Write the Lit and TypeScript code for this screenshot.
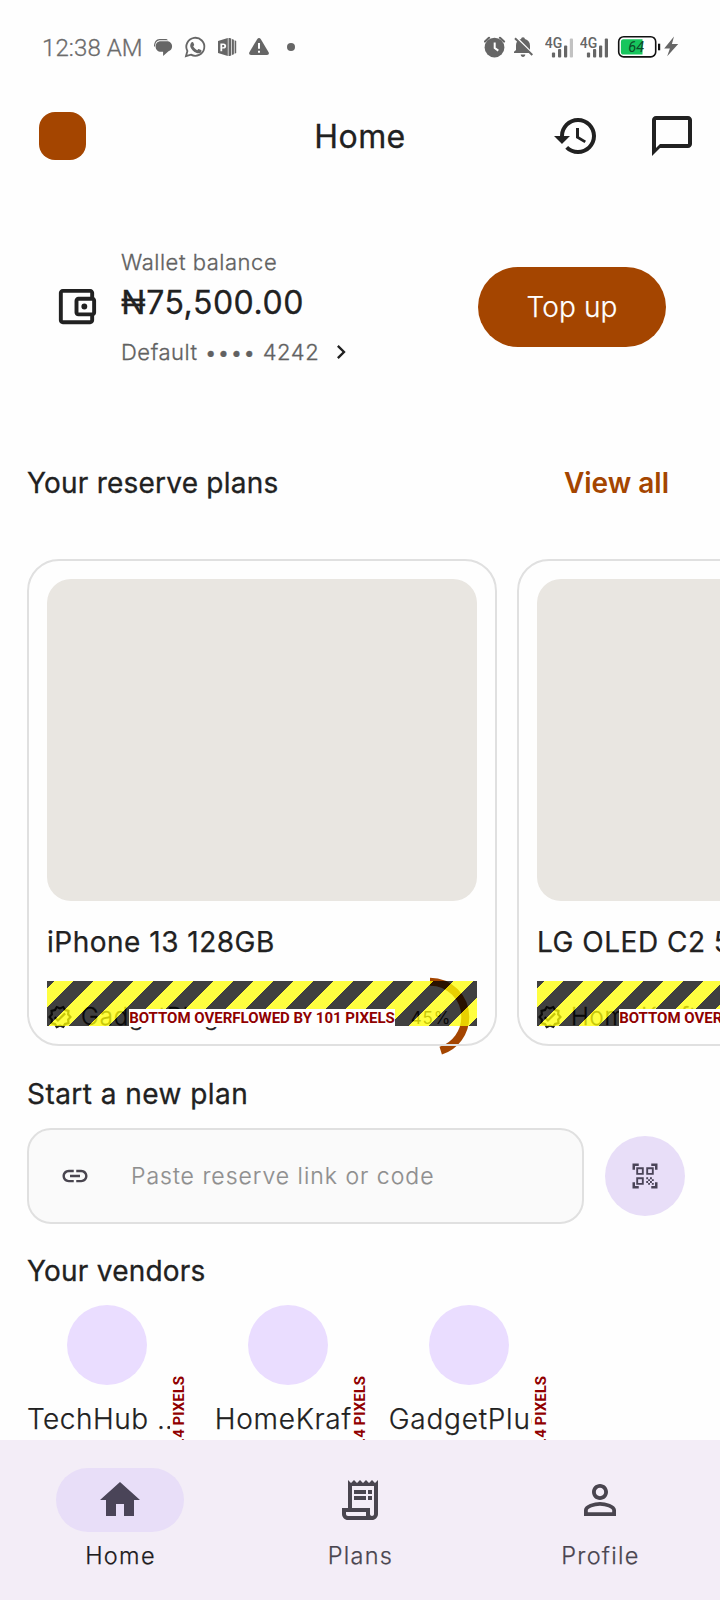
import { LitElement, html, css } from "lit";
import { customElement, property } from "lit/decorators.js";

const PATHS = {
  history:
    "M13,3c-4.97,0 -9,4.03 -9,9L1,12l3.89,3.89 0.07,0.14L9,12L6,12c0,-3.87 3.13,-7 7,-7s7,3.13 7,7 -3.13,7 -7,7c-1.93,0 -3.68,-0.79 -4.94,-2.06l-1.42,1.42C8.27,19.99 10.51,21 13,21c4.97,0 9,-4.03 9,-9s-4.03,-9 -9,-9zM12,8v5l4.28,2.54 0.72,-1.21 -3.5,-2.08L13.5,8L12,8z",
  chat: "M20 2H4c-1.1 0-2 .9-2 2v18l4-4h14c1.1 0 2-.9 2-2V4c0-1.1-.9-2-2-2zm0 14H6l-2 2V4h16v12z",
  wallet:
    "M21 7.28V5c0-1.1-.9-2-2-2H5c-1.11 0-2 .9-2 2v14c0 1.1.89 2 2 2h14c1.1 0 2-.9 2-2v-2.28c.59-.35 1-.98 1-1.72V9c0-.74-.41-1.37-1-1.72zM20 9v6h-7V9h7zM5 19V5h14v2h-6c-1.1 0-2 .9-2 2v6c0 1.1.9 2 2 2h6v2H5z M16 10.5a1.5 1.5 0 1 0 0 3a1.5 1.5 0 1 0 0-3z",
  chevron: "M10 6L8.59 7.41 13.17 12l-4.58 4.59L10 18l6-6z",
  link: "M3.9 12c0-1.71 1.39-3.1 3.1-3.1h4V7H7c-2.76 0-5 2.24-5 5s2.24 5 5 5h4v-1.9H7c-1.71 0-3.1-1.39-3.1-3.1zM8 13h8v-2H8v2zm9-6h-4v1.9h4c1.71 0 3.1 1.39 3.1 3.1s-1.39 3.1-3.1 3.1h-4V17h4c2.76 0 5-2.24 5-5s-2.24-5-5-5z",
  qr: "M9.5 6.5v3h-3v-3h3M11 5H5v6h6V5zm-1.5 9.5v3h-3v-3h3M11 13H5v6h6v-6zm6.5-6.5v3h-3v-3h3M19 5h-6v6h6V5zm-6 8h1.5v1.5H13V13zm1.5 1.5H16V16h-1.5v-1.5zM16 13h1.5v1.5H16V13zm-3 3h1.5v1.5H13V16zm1.5 1.5H16V19h-1.5v-1.5zM16 16h1.5v1.5H16V16zm1.5-1.5H19V16h-1.5v-1.5zm0 3H19V19h-1.5v-1.5zM22 7h-2V4h-3V2h5v5zm0 15v-5h-2v3h-3v2h5zM2 22h5v-2H4v-3H2v5zM2 2v5h2V4h3V2H2z",
  verified:
    "M23 11.99l-2.44-2.79.34-3.69-3.61-.82L15.4 1.5 12 2.96 8.6 1.5 6.71 4.69 3.1 5.5l.34 3.7L1 11.99l2.44 2.79-.34 3.7 3.61.82 1.89 3.2 3.4-1.47 3.4 1.46 1.89-3.19 3.61-.82-.34-3.69 2.44-2.8zm-3.95 1.48l-.56.65.08.85.18 1.95-1.9.43-.84.19-.44.74-.99 1.68-1.78-.77-.8-.34-.79.34-1.78.77-.99-1.67-.44-.74-.84-.19-1.9-.43.18-1.96.08-.85-.56-.65-1.29-1.47 1.29-1.48.56-.65-.09-.86-.18-1.94 1.9-.43.84-.19.44-.74.99-1.68 1.78.77.8.34.79-.34 1.78-.77.99 1.68.44.74.84.19 1.9.43-.18 1.95-.08.85.56.65 1.29 1.47-1.28 1.48z M10.09 13.75l-2.32-2.33-1.48 1.49 3.8 3.81 7.34-7.36-1.48-1.49z",
  home: "M10 20v-6h4v6h5v-8h3L12 3 2 12h3v8z",
  receipt:
    "M19.5 3.5L18 2l-1.5 1.5L15 2l-1.5 1.5L12 2l-1.5 1.5L9 2 7.5 3.5 6 2v14H3v3c0 1.66 1.34 3 3 3h12c1.66 0 3-1.34 3-3V2l-1.5 1.5zM15 20H6c-.55 0-1-.45-1-1v-1h10v2zm4-1c0 .55-.45 1-1 1s-1-.45-1-1v-3H8V5h11v14z M9 7h6v2H9z M16 7h2v2h-2z M9 10h6v2H9z M16 10h2v2h-2z",
  person:
    "M12 5.9c1.16 0 2.1.94 2.1 2.1s-.94 2.1-2.1 2.1S9.9 9.16 9.9 8s.94-2.1 2.1-2.1m0 9c2.97 0 6.1 1.46 6.1 2.1v1.1H5.9V17c0-.64 3.13-2.1 6.1-2.1M12 4C9.79 4 8 5.79 8 8s1.79 4 4 4 4-1.79 4-4-1.79-4-4-4zm0 9c-2.67 0-8 1.34-8 4v3h16v-3c0-2.66-5.33-4-8-4z",
};

const icon = (name: keyof typeof PATHS, size: number) =>
  html`<svg class="icon" width=${size} height=${size} viewBox="0 0 24 24" fill="currentColor"><path d=${PATHS[name]}></path></svg>`;

@customElement("status-bar")
class StatusBar extends LitElement {
  static styles = css`
    :host {
      display: flex;
      align-items: center;
      height: 94px;
      padding: 0 41px 0 42px;
      box-sizing: border-box;
      color: #666;
      font-family: Roboto, sans-serif;
    }
    .time {
      width: 112px;
      font-size: 24px;
      line-height: 28px;
      font-weight: 300;
      -webkit-text-stroke: 0.3px currentColor;
      letter-spacing: 0.1px;
      color: #6b6b6b;
      white-space: nowrap;
      padding-top: 1px;
    }
    svg {
      display: block;
      flex: none;
    }
    .spacer {
      flex: 1;
    }
  `;

  private signal(last: string) {
    return html`<svg width="35" height="24" viewBox="0 0 35 24" fill="#666">
      <text x="-0.3" y="12.6" font-family="Roboto" font-size="14.5" font-weight="500" textLength="17.5" lengthAdjust="spacingAndGlyphs">4G</text>
      <rect x="6.9" y="17.5" width="3.2" height="5" rx="1"></rect>
      <rect x="13" y="14" width="3.2" height="8.5" rx="1"></rect>
      <rect x="19" y="10.5" width="3.2" height="12" rx="1"></rect>
      <rect x="24.8" y="3.5" width="3.2" height="19" rx="1" fill=${last}></rect>
    </svg>`;
  }

  render() {
    return html`
      <span class="time">12:38 AM</span>
      <svg width="137" height="24" viewBox="154 35 137 24" fill="#666" overflow="visible">
        <path d="M154 46.5c0-4.5 2.2-7.5 5.6-7.5h6.8l1.8 1.300h-7.800c-3.600 0-5.200 2.400-5.400 6.200z"></path>
        <path d="M160.700 41.300h6.100c3.100 0 5.300 2.100 5.300 5 0 2.700-1.400 4.200-3.600 5l-5.400 4.800v-4.300h-2c-3.400 0-5.500-2.200-5.500-5.300 0-3.100 2-5.200 5.100-5.200z"></path>
        <path d="M186 56.100l1.400-5.100a9 9 0 1 1 3.500 3.600z" fill="none" stroke="#666" stroke-width="1.8"></path>
        <path d="M191.600 42.300c.6-.6 1.400-.5 1.700.2l.8 1.900c.2.5 0 .9-.9 1.900 1 1.900 2.300 3.100 4.200 3.900.9-1.100 1.200-1.300 1.800-1l1.900.9c.7.4.5 1.300 0 2.100-.8 1.200-2.600 1.500-4.400.8-3.200-1.200-5.300-3.400-6.300-6-.5-1.800 0-3.500 1.200-4.700z"></path>
        <path fill-rule="evenodd" d="M218 41l9.800-3v18l-9.800-3zm2.400 2.400v7.800h1.800v-2.600h1.200c1.700 0 2.800-1 2.800-2.600s-1.100-2.600-2.800-2.600zm1.800 1.500h.9c.8 0 1.200.4 1.200 1.100s-.4 1.200-1.200 1.200h-.9z"></path>
        <path d="M228.500 38h1.200l1.500.5v17l-1.500.5h-1.200zM231.900 39l2 .8v14.400l-2 .8zM234.600 40.300l1.600.8v11.800l-1.600.8z"></path>
        <path d="M257.300 38.900c.8-1.300 2.600-1.300 3.400 0l7.900 13.300c.8 1.400-.1 2.800-1.600 2.800h-16c-1.500 0-2.400-1.400-1.600-2.800z"></path>
        <path d="M259 43v5.800M259 50.800v2" stroke="#fff" stroke-width="2"></path>
        <circle cx="291" cy="47" r="4"></circle>
      </svg>
      <span class="spacer"></span>
      <svg width="61" height="24" viewBox="484 35 61 24" fill="#666">
        <circle cx="494.5" cy="47.600" r="9.900"></circle>
        <path d="M485 41.500l4-3.700M504 41.500l-4-3.700" stroke="#666" stroke-width="2.200" stroke-linecap="round"></path>
        <path d="M494.700 42.500v5.500l3.600 2.600" fill="none" stroke="#fff" stroke-width="2"></path>
        <path d="M523 37.200c1.200 0 1.900.8 1.900 1.900 3.300.8 5.100 3.400 5.100 6.700v5l2 2.200h-18v-1.200l2-1.800v-4.700c0-3 1.900-5.500 5.100-6.200 0-1.100.7-1.900 1.900-1.900zM520.700 54.500h4.600c0 1.400-1 2.400-2.300 2.400s-2.300-1-2.300-2.400z"></path>
        <path d="M516.500 37.600l17 17" stroke="#fff" stroke-width="2"></path>
        <path d="M515 38.200l17.300 16.800" stroke="#666" stroke-width="2"></path>
      </svg>
      ${this.signal("#c2c2c2")}${this.signal("#666")}
      <svg width="64" height="24" viewBox="615 35 64 24">
        <rect x="618.7" y="36.700" width="37" height="20.200" rx="5" fill="#fff" stroke="#111" stroke-width="1.600"></rect>
        <path d="M623.5 39.300h19v15.200h-19a2.600 2.600 0 0 1-2.600-2.600v-10a2.600 2.600 0 0 1 2.600-2.600z" fill="#17c55d"></path>
        <text x="628.3" y="51.8" font-family="Roboto" font-size="14.5" font-style="italic" fill="#0d4a27">64</text>
        <rect x="658" y="43.700" width="2.200" height="6.600" fill="#111"></rect>
        <path d="M674 36.500L664.200 48.600h5.700l-2.700 7.700 11-12.300h-6.300z" fill="#666"></path>
      </svg>
    `;
  }
}

@customElement("plan-card")
class PlanCard extends LitElement {
  @property() name = "";
  @property() vendor = "";
  @property({ type: Number }) percent = 0;

  static styles = css`
    :host {
      display: block;
      position: relative;
      flex: none;
      width: 470px;
      height: 487px;
      padding: 20px;
      box-sizing: border-box;
      color: #212121;
    }
    :host::after {
      content: "";
      position: absolute;
      inset: 0;
      border: 2px solid #e0e0e0;
      border-radius: 32px;
    }
    .body {
      position: relative;
      height: 447px;
    }
    .photo {
      height: 322px;
      border-radius: 24px;
      background: #e9e6e1;
    }
    .name {
      margin-top: 24px;
      font-size: 28px;
      line-height: 34px;
      letter-spacing: 0.5px;
      -webkit-text-stroke: 0.25px currentColor;
      white-space: nowrap;
    }
    .meta {
      display: flex;
      align-items: center;
      height: 80px;
      margin-top: 18px;
    }
    .seal {
      display: block;
      margin-right: 8px;
    }
    .vendor {
      flex: 1;
      font-size: 24px;
      line-height: 30px;
      font-weight: 300;
      letter-spacing: 0.8px;
      -webkit-text-stroke: 0.3px currentColor;
    }
    .ring {
      position: relative;
      width: 80px;
      height: 80px;
      display: grid;
      place-items: center;
      margin-right: 7px;
    }
    .ring svg {
      position: absolute;
      inset: 0;
    }
    .pct {
      font-size: 17px;
      letter-spacing: 0.8px;
      padding: 2px 0 0 2px;
    }
    .warning {
      position: absolute;
      left: 0;
      right: 0;
      top: 402px;
      height: 45px;
      display: flex;
      justify-content: center;
      align-items: flex-start;
      background: repeating-linear-gradient(
        135deg,
        rgba(0, 0, 0, 0.75) 0 4.95px,
        rgba(255, 255, 0, 0.75) 4.95px 19.09px,
        rgba(0, 0, 0, 0.75) 19.09px 28.284px
      );
    }
    .warning span {
      margin-top: 28px;
      background: #fff;
      color: #900000;
      font: 700 15px/18px Roboto, sans-serif;
      height: 18px;
      white-space: nowrap;
    }
  `;

  render() {
    const r = 35.3;
    const length = 2 * Math.PI * r;
    return html`<div class="body">
      <div class="photo"></div>
      <div class="name">${this.name}</div>
      <div class="meta">
        <svg class="seal" width="26" height="26" viewBox="0 0 24 24" fill="#212121"><path d=${PATHS.verified}></path></svg>
        <span class="vendor">${this.vendor}</span>
        <div class="ring">
          <svg width="80" height="80" viewBox="-40 -40 80 80">
            <circle r=${r} fill="none" stroke="#a44500" stroke-width="8" transform="rotate(-90)"
              stroke-dasharray="${(length * this.percent) / 100} ${length}"></circle>
          </svg>
          <span class="pct">${this.percent}%</span>
        </div>
      </div>
      <div class="warning"><span>BOTTOM OVERFLOWED BY 101 PIXELS</span></div>
    </div>`;
  }
}

@customElement("app-root")
class AppRoot extends LitElement {
  static styles = css`
    :host {
      display: flex;
      flex-direction: column;
      width: 720px;
      height: 1600px;
      overflow: hidden;
      background: #fefefe;
      color: #212121;
      font-family: Inter, sans-serif;
    }
    .icon {
      display: block;
      flex: none;
    }
    .appbar {
      flex: none;
      display: grid;
      grid-template-columns: 1fr auto 1fr;
      align-items: center;
      height: 84px;
      padding: 0 24px 0 39px;
    }
    .avatar {
      width: 47px;
      height: 48px;
      border-radius: 16px;
      background: #a44500;
    }
    .title {
      font-size: 32px;
      line-height: 40px;
      letter-spacing: 0.4px;
      -webkit-text-stroke: 0.3px currentColor;
      margin-right: 15px;
      padding-top: 2px;
    }
    .actions {
      display: flex;
      justify-content: flex-end;
      gap: 48px;
    }
    .walletbar {
      flex: none;
      display: flex;
      align-items: center;
      height: 257px;
      padding: 0 54px 0 53px;
    }
    .funds {
      flex: 1;
      padding-left: 21px;
    }
    .small {
      display: flex;
      align-items: center;
      font-size: 22px;
      line-height: 30px;
      font-weight: 300;
      letter-spacing: 0.53px;
      -webkit-text-stroke: 0.3px currentColor;
      color: #616161;
    }
    .small .icon {
      margin-left: 8px;
      color: #212121;
    }
    .amount {
      font-size: 32px;
      line-height: 40px;
      letter-spacing: 0.53px;
      -webkit-text-stroke: 0.3px currentColor;
      margin: 6px 0 14px;
    }
    .topup {
      width: 188px;
      height: 80px;
      display: grid;
      place-items: center;
      border-radius: 40px;
      background: #a44500;
      color: #fff;
      font-size: 28px;
      font-weight: 300;
      letter-spacing: 0.15px;
      -webkit-text-stroke: 0.25px currentColor;
    }
    .heading {
      font-size: 28px;
      line-height: 34px;
      letter-spacing: 0.22px;
      -webkit-text-stroke: 0.3px currentColor;
    }
    .split {
      flex: none;
      display: flex;
      justify-content: space-between;
      align-items: center;
      height: 96px;
      padding: 0 51px 0 27px;
    }
    .viewall {
      color: #a44500;
      font-weight: 600;
      font-size: 28px;
      line-height: 34px;
    }
    .cards {
      flex: none;
      display: flex;
      gap: 20px;
      margin: 28px 0 0 27px;
    }
    .start {
      margin: 31px 0 0 27px;
      letter-spacing: 0.45px;
    }
    .entry {
      flex: none;
      display: flex;
      align-items: center;
      gap: 21px;
      margin: 16.5px 0 0 27px;
    }
    .field {
      display: flex;
      align-items: center;
      box-sizing: border-box;
      width: 557px;
      height: 96px;
      padding-left: 31px;
      border: 2px solid #e0e0e0;
      border-radius: 24px;
      background: #fafafa;
      color: #49454f;
    }
    .placeholder {
      margin-left: 41px;
      padding-top: 1px;
      font-size: 23px;
      font-weight: 300;
      letter-spacing: 1px;
      -webkit-text-stroke: 0.2px currentColor;
      color: #8e8e8e;
    }
    .scan {
      display: grid;
      place-items: center;
      width: 80px;
      height: 80px;
      border-radius: 50%;
      background: #e8def8;
      color: #4a4458;
    }
    .vendorshead {
      margin: 30.5px 0 0 27px;
    }
    .vendors {
      flex: 1;
      min-height: 0;
      overflow: hidden;
      display: flex;
      gap: 21px;
      padding: 16.5px 0 0 27px;
    }
    .vendoritem {
      position: relative;
      width: 160px;
      flex: none;
      display: flex;
      flex-direction: column;
      align-items: center;
    }
    .disc {
      width: 80px;
      height: 80px;
      border-radius: 50%;
      background: #eaddff;
    }
    .vname {
      margin-top: 17px;
      padding-right: 1px;
      font-size: 28px;
      line-height: 34px;
      font-weight: 300;
      letter-spacing: 0.75px;
      -webkit-text-stroke: 0.25px currentColor;
      white-space: nowrap;
    }
    .vname.cut {
      width: 159px;
      letter-spacing: 0.5px;
    }
    .side {
      position: absolute;
      top: 71px;
      right: 0;
      width: 15px;
      padding-right: 2px;
      background: #fefefe;
      color: #900000;
      font: 700 15px/15px Roboto, sans-serif;
      writing-mode: vertical-rl;
      transform: rotate(180deg);
      white-space: nowrap;
    }
    .nav {
      flex: none;
      display: flex;
      height: 160px;
      background: #f3edf7;
      position: relative;
    }
    .tab {
      flex: 1;
      display: flex;
      flex-direction: column;
      align-items: center;
      padding-top: 28px;
      color: #49454f;
    }
    .pill {
      display: grid;
      place-items: center;
      width: 128px;
      height: 64px;
      border-radius: 32px;
    }
    .tab.on .pill {
      background: #e8def8;
      color: #4a4458;
    }
    .label {
      margin-top: 8px;
      padding-left: 1px;
      font-size: 23.5px;
      line-height: 32px;
      font-weight: 300;
      letter-spacing: 1.3px;
      -webkit-text-stroke: 0.25px currentColor;
    }
    .tab.on .label {
      color: #1d1b20;
    }
  `;

  private tabs: [string, keyof typeof PATHS][] = [
    ["Home", "home"],
    ["Plans", "receipt"],
    ["Profile", "person"],
  ];

  render() {
    return html`
      <status-bar></status-bar>
      <header class="appbar">
        <div class="avatar"></div>
        <div class="title">Home</div>
        <div class="actions">${icon("history", 48)}${icon("chat", 48)}</div>
      </header>
      <section class="walletbar">
        ${icon("wallet", 47)}
        <div class="funds">
          <div class="small">Wallet balance</div>
          <div class="amount">₦75,500.00</div>
          <div class="small">Default •••• 4242 ${icon("chevron", 28)}</div>
        </div>
        <div class="topup">Top up</div>
      </section>
      <div class="split">
        <span class="heading">Your reserve plans</span>
        <span class="viewall">View all</span>
      </div>
      <div class="cards">
        <plan-card name="iPhone 13 128GB" vendor="GadgetPlug" percent="45"></plan-card>
        <plan-card name="LG OLED C2 55" vendor="HomeKraft" percent="60"></plan-card>
      </div>
      <div class="heading start">Start a new plan</div>
      <div class="entry">
        <div class="field">${icon("link", 30)}<span class="placeholder">Paste reserve link or code</span></div>
        <div class="scan">${icon("qr", 30)}</div>
      </div>
      <div class="heading vendorshead">Your vendors</div>
      <div class="vendors">
        ${["TechHub …", "HomeKraft", "GadgetPlug"].map(
          (v) => html`<div class="vendoritem">
            <div class="disc"></div>
            <div class="vname ${v.endsWith("…") ? "cut" : ""}">${v}</div>
            <span class="side">RIGHT OVERFLOWED BY 4.4 PIXELS</span>
          </div>`
        )}
      </div>
      <nav class="nav">
        ${this.tabs.map(
          ([name, glyph], i) => html`<div class="tab ${i === 0 ? "on" : ""}">
            <div class="pill">${icon(glyph, 48)}</div>
            <span class="label">${name}</span>
          </div>`
        )}
      </nav>
    `;
  }
}
